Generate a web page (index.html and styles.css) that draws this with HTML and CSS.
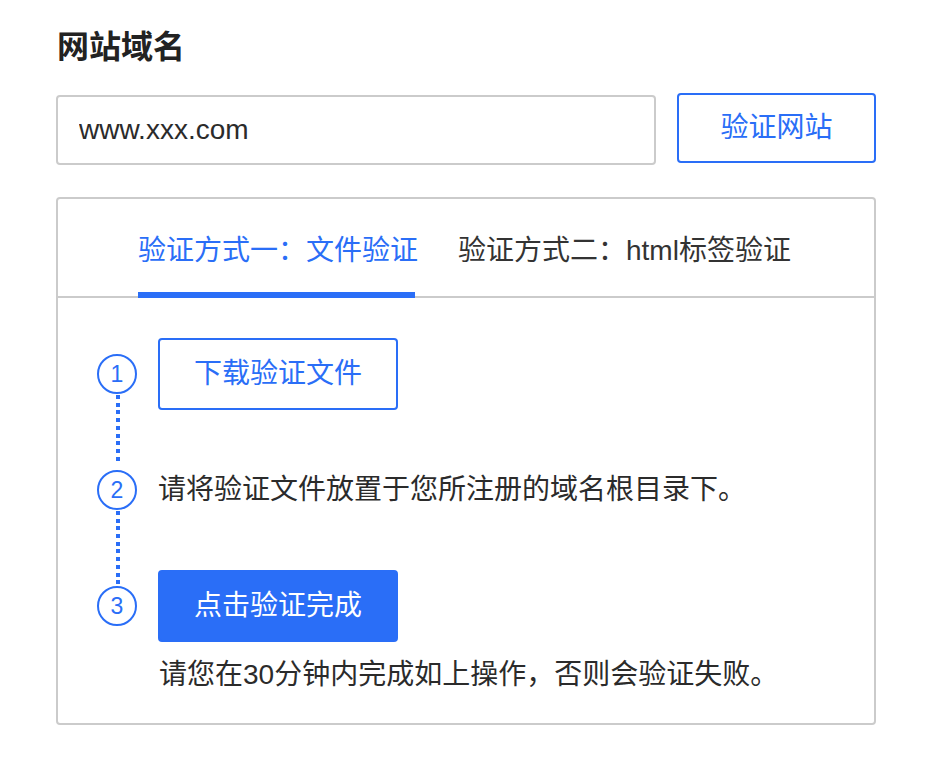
FILE: index.html
```html
<!DOCTYPE html>
<html lang="zh-CN">
<head>
<meta charset="utf-8">
<title>网站域名</title>
<link rel="stylesheet" href="styles.css">
</head>
<body>
<main class="page">
  <h1 class="title">网站域名</h1>
  <div class="domain-row">
    <input class="domain-input" type="text" value="www.xxx.com">
    <button class="btn btn-outline verify-site">验证网站</button>
  </div>
  <section class="card">
    <nav class="tabs">
      <div class="tab active">验证方式一：文件验证</div>
      <div class="tab">验证方式二：html标签验证</div>
    </nav>
    <ol class="steps">
      <li class="step step-1">
        <span class="num">1</span>
        <button class="btn btn-outline step-btn">下载验证文件</button>
      </li>
      <li class="step step-2">
        <span class="num">2</span>
        <p class="step-text">请将验证文件放置于您所注册的域名根目录下。</p>
      </li>
      <li class="step step-3">
        <span class="num">3</span>
        <button class="btn btn-primary step-btn">点击验证完成</button>
      </li>
    </ol>
    <p class="note">请您在30分钟内完成如上操作，否则会验证失败。</p>
  </section>
</main>
</body>
</html>
```
FILE: styles.css
```css
* { box-sizing: border-box; }
html, body { margin: 0; padding: 0; background: #fff; }
body {
  font-family: "Liberation Sans", "Noto Sans CJK SC", sans-serif;
  color: #333;
}
.page {
  width: 820px;
  margin-left: 56px;
  padding-top: 31px;
}
.title {
  margin: 0;
  font-size: 32px;
  line-height: 32px;
  font-weight: 600;
  color: #222;
  padding-left: 1px;
}
.domain-row {
  display: flex;
  align-items: flex-start;
  gap: 21px;
  margin-top: 30px;
}
.domain-input {
  width: 600px;
  height: 70px;
  margin: 2px 0 0;
  border: 2px solid #cbcbcb;
  border-radius: 4px;
  padding: 0 0 0 21px;
  font-family: "Liberation Sans", "Noto Sans CJK SC", sans-serif;
  font-size: 28px;
  color: #2b2b2b;
  outline: none;
}
.btn {
  display: flex;
  align-items: center;
  justify-content: center;
  border-radius: 4px;
  font-family: "Liberation Sans", "Noto Sans CJK SC", sans-serif;
  font-size: 28px;
  line-height: 28px;
  padding: 0;
  cursor: pointer;
}
.btn-outline {
  background: #fff;
  border: 2px solid #2a6ef7;
  color: #2a6ef7;
}
.btn-primary {
  background: #2a6ef7;
  border: 2px solid #2a6ef7;
  color: #fff;
}
.verify-site {
  width: 199px;
  height: 70px;
}
.card {
  margin-top: 32px;
  border: 2px solid #cbcbcb;
  border-radius: 4px;
  padding-bottom: 34px;
}
.tabs {
  display: flex;
  gap: 40px;
  padding-left: 80px;
  border-bottom: 2px solid #cbcbcb;
}
.tab {
  position: relative;
  padding: 38px 0 31px;
  font-size: 28px;
  line-height: 28px;
  color: #333;
  white-space: nowrap;
}
.tab.active { color: #2a6ef7; }
.tab.active::after {
  content: "";
  position: absolute;
  left: 0;
  right: 3px;
  bottom: -2px;
  height: 6px;
  background: #2a6ef7;
}
.steps {
  list-style: none;
  margin: 40px 0 0;
  padding: 0 0 0 39px;
  display: flex;
  flex-direction: column;
  gap: 60px;
}
.step {
  position: relative;
  display: flex;
  align-items: center;
  gap: 21px;
  min-height: 40px;
}
.num {
  flex: none;
  width: 40px;
  height: 40px;
  border: 2px solid #2a6ef7;
  border-radius: 50%;
  display: flex;
  align-items: center;
  justify-content: center;
  color: #2a6ef7;
  font-size: 23px;
  line-height: 1;
}
.step-1::after,
.step-2::after {
  content: "";
  position: absolute;
  left: 19px;
  top: calc(50% + 21px);
  width: 4px;
  background: repeating-linear-gradient(to bottom, #2a6ef7 0 4px, transparent 4px 7.7px);
}
.step-1::after { height: 67px; }
.step-2::after { height: 76px; }
.step-btn {
  width: 240px;
  height: 72px;
}
.step-text {
  margin: 0;
  font-size: 28px;
  line-height: 28px;
  color: #2b2b2b;
}
.note {
  margin: 19px 0 0 101px;
  font-size: 28px;
  line-height: 28px;
  color: #2b2b2b;
}
```
